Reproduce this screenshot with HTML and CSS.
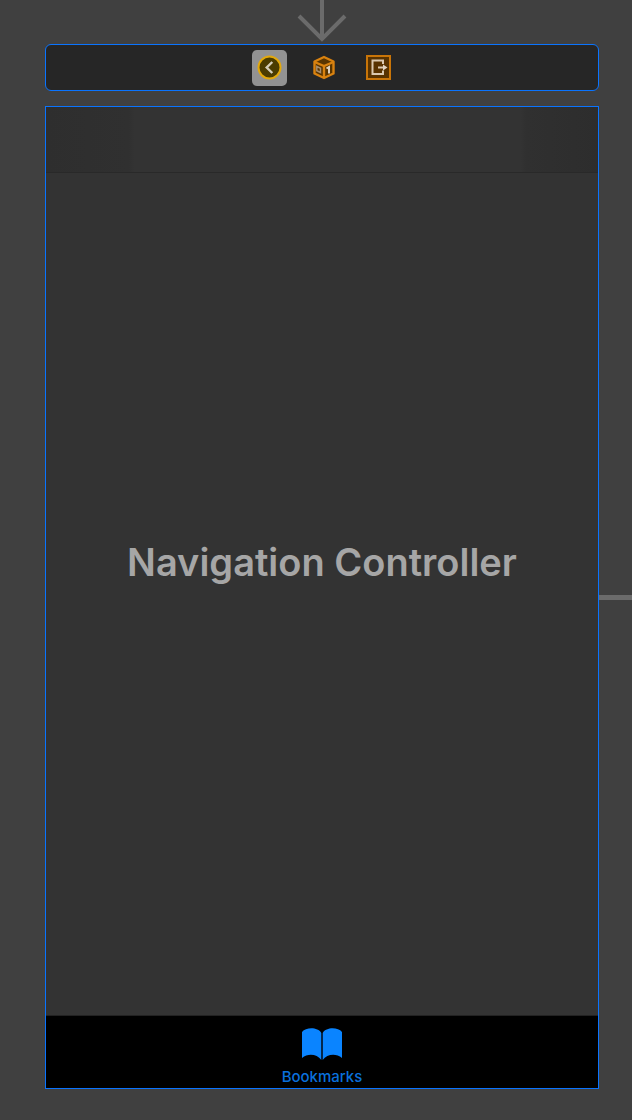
FILE: index.html
```
<!DOCTYPE html>
<html lang="en">
<head>
  <meta charset="UTF-8">
  <meta name="viewport" content="width=device-width, initial-scale=1">
  <title>Navigation Controller</title>
  <link rel="stylesheet" href="styles.css">
</head>
<body>

<main class="canvas">
  <!-- incoming segue -->
  <svg class="arrow" viewBox="0 0 52 44" aria-hidden="true">
    <path d="M26 0V38M3 16L26 39L49 16"/>
  </svg>

  <div class="dock">
    <button class="dock-btn selected" aria-label="Navigation Controller">
      <svg viewBox="0 0 26 26">
        <circle cx="12.5" cy="12.5" r="11" fill="#4b3c00" stroke="#e2a80c" stroke-width="2"/>
        <path d="M15.3 7L9.7 12.5L15.3 18" fill="none" stroke="#d4cdb8" stroke-width="2.4"/>
      </svg>
    </button>
    <button class="dock-btn" aria-label="First Responder">
      <svg viewBox="0 0 26 26">
        <path d="M13 2L22.5 6.5V18.5L13 23L3.5 18.5V6.5Z" fill="#593500" stroke="#d9820f" stroke-width="2.4" stroke-linejoin="round"/>
        <path d="M3.5 7L13 11L22.5 7M13 11V23" fill="none" stroke="#d9820f" stroke-width="2.4"/>
        <path d="M5.8 11.5L9.5 13.3V17.5L5.8 15.7Z" fill="none" stroke="#a58c6d" stroke-width="1.5"/>
        <path d="M15.5 13.5L18 12V18.5" fill="none" stroke="#ded1bd" stroke-width="2"/>
      </svg>
    </button>
    <button class="dock-btn" aria-label="Exit">
      <svg viewBox="0 0 26 26">
        <rect x="2" y="1" width="23" height="23" fill="#593300" stroke="#c97508" stroke-width="2"/>
        <path d="M18 9V5.5H7.5V19H18V15.5" fill="none" stroke="#dbc9b0" stroke-width="2"/>
        <path d="M13 12.5H19" fill="none" stroke="#dbc9b0" stroke-width="2"/>
        <path d="M18 9.5L22.5 12.5L18 15.5Z" fill="#e2d5c2"/>
      </svg>
    </button>
  </div>

  <section class="scene">
    <div class="view">
      <div class="navbar"></div>
      <h1>Navigation Controller</h1>
    </div>
    <nav class="tabbar">
      <a class="tab" href="#bookmarks">
        <svg viewBox="0 0 40 32" aria-hidden="true">
          <path d="M0 4C4-1 16-1 19.3 5V32C15 26 6 25 0 30Z"/>
          <path d="M40 4C36-1 24-1 20.7 5V32C25 26 34 25 40 30Z"/>
        </svg>
        <span>Bookmarks</span>
      </a>
    </nav>
  </section>

  <!-- outgoing segue -->
  <div class="connector"></div>
</main>

</body>
</html>
```
FILE: styles.css
```
* {
  box-sizing: border-box;
}

body {
  margin: 0;
  background: #404040;
  font-family: Inter, "Liberation Sans", sans-serif;
}

.canvas {
  display: grid;
  grid-template-columns: 45px 1fr 33px;
  grid-template-rows: auto auto 1fr;
  min-height: 100vh;
  padding-bottom: 31px;
}

.arrow {
  grid-column: 2;
  justify-self: center;
  width: 52px;
  height: 44px;
  fill: none;
  stroke: #6b6b6b;
  stroke-width: 4;
}

.dock {
  grid-column: 2;
  display: flex;
  align-items: center;
  justify-content: center;
  gap: 19px;
  height: 47px;
  margin-bottom: 15px;
  padding-left: 3px;
  background: #262626;
  border: 1px solid #0a74ff;
  border-radius: 6px;
}

.dock-btn {
  display: flex;
  align-items: center;
  justify-content: center;
  width: 35px;
  height: 36px;
  padding: 0;
  background: none;
  border: none;
  border-radius: 5px;
}

.dock-btn.selected {
  background: #929292;
}

.dock-btn svg {
  width: 26px;
  height: 26px;
}

.scene {
  grid-column: 2;
  display: flex;
  flex-direction: column;
  border: 1px solid #0a74ff;
}

.view {
  position: relative;
  flex: 1;
  display: flex;
  align-items: center;
  justify-content: center;
  padding-top: 1px;
  background: #333333;
}

/* translucent bar over the view */
.navbar {
  position: absolute;
  top: 0;
  left: 0;
  right: 0;
  height: 66px;
  background: linear-gradient(to right, #2e2e2e, #303030 15%, #333333 16%, #333333 86%, #303030 87%, #2d2d2d);
  border-bottom: 1px solid #292929;
}

h1 {
  margin: 0;
  color: #a6a6a6;
  font-size: 38px;
  font-weight: 600;
  line-height: 48px;
  text-align: center;
}

.tabbar {
  display: flex;
  justify-content: center;
  height: 73px;
  background: #000000;
  border-top: 1px solid #222222;
}

.tab {
  display: flex;
  flex-direction: column;
  align-items: center;
  gap: 8px;
  padding-top: 12px;
  color: #0a70dc;
  font-size: 15px;
  font-weight: 500;
  line-height: 18px;
  text-decoration: none;
}

.tab svg {
  width: 40px;
  height: 32px;
  fill: #0a84ff;
}

.connector {
  grid-column: 3;
  align-self: center;
  height: 5px;
  background: #6b6b6b;
}
```
